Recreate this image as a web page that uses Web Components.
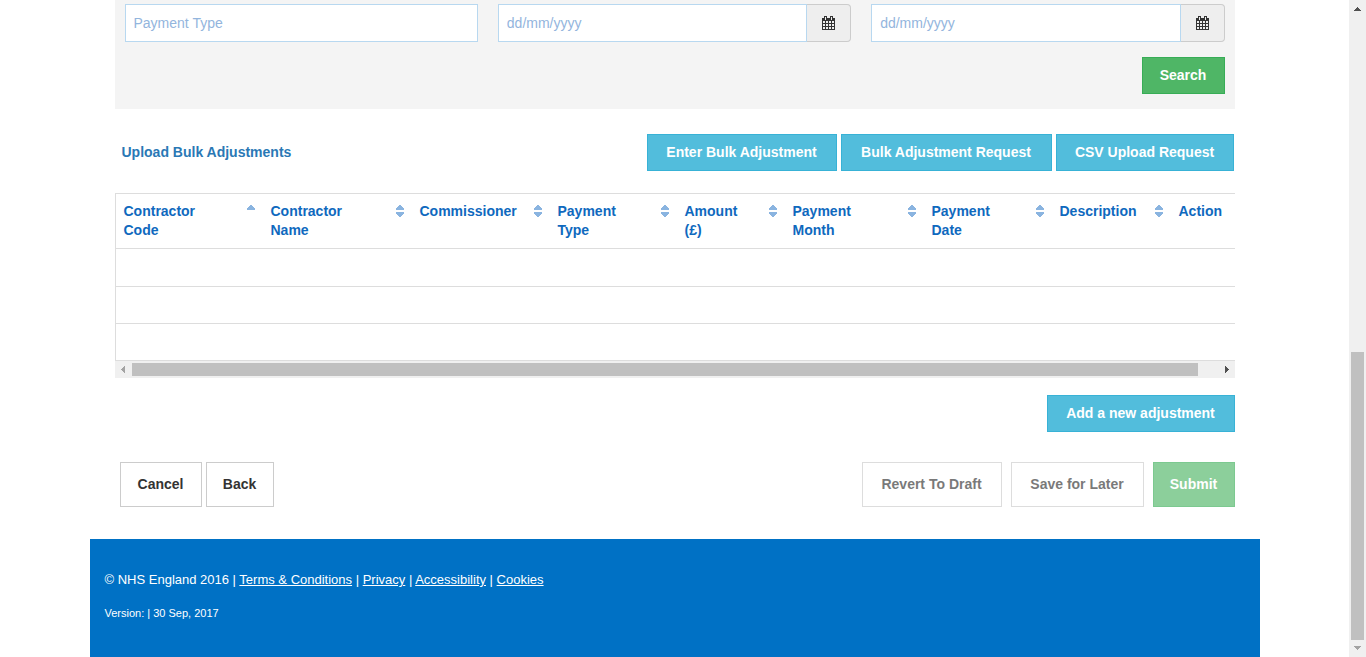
<!DOCTYPE html>
<html lang="en">
<head>
<meta charset="utf-8">
<title>Bulk Adjustments</title>
<style>
html { height: 100%; }
body { margin: 0; min-height: 100%; display: flex; background: #fff; color: #333;
  font: 14px/19px "Liberation Sans", Arial, sans-serif; }
adjustments-page { flex: 1; min-width: 0; }
</style>
</head>
<body>
<adjustments-page></adjustments-page>
<scroll-rail vertical></scroll-rail>
<script>
function define(name, html, setup) {
  const template = document.createElement('template');
  template.innerHTML = html;
  customElements.define(name, class extends HTMLElement {
    constructor() {
      super();
      this.attachShadow({ mode: 'open' }).append(template.content.cloneNode(true));
    }
    connectedCallback() { if (setup) setup(this, this.shadowRoot); }
  });
}

define('scroll-rail', `
<style>
:host { display: grid; background: #f0f0f0; grid-template: 17px / 17px minmax(0, 1066fr) minmax(0, 20fr) 17px; }
:host([vertical]) { grid-template: 17px minmax(0, 335fr) minmax(0, 288fr) 17px / 17px; width: 17px; align-self: stretch; }
i { display: block; background: #c0c0c0; margin: 2px 0; grid-area: 1 / 2; }
:host([vertical]) i { margin: 0 2px; grid-area: 3 / 1; }
svg { width: 17px; height: 17px; shape-rendering: crispEdges; }
.end { grid-area: 1 / 4; }
:host([vertical]) .end { grid-area: 4 / 1; }
.off { fill: #a3a3a3; } .on { fill: #505050; }
.v { display: none; }
:host([vertical]) .v { display: inline; }
:host([vertical]) .h { display: none; }
</style>
<svg viewBox="0 0 17 17" aria-hidden="true"><path class="h off" d="M10 5v7L6 8.500z"/><path class="v on" d="M5 11h7L8.500 7z"/></svg>
<i></i>
<svg class="end" viewBox="0 0 17 17" aria-hidden="true"><path class="h on" d="M7 5v7l4-3.500z"/><path class="v off" d="M5 6h7l-3.500 4z"/></svg>`);

define('action-button', `
<style>
:host { display: block; --fill: #fff; --edge: #ccc; --ink: #333; }
:host([kind=info]) { --fill: #52bddc; --edge: #38b2d6; --ink: #fff; }
:host([kind=success]) { --fill: #4fb666; --edge: #37ad56; --ink: #fff; }
button { display: block; width: 100%; height: 37px; padding: 0 16px; border: 1px solid var(--edge);
  background: var(--fill); color: var(--ink); font: bold 14px/19px "Liberation Sans", Arial, sans-serif; white-space: nowrap; cursor: pointer; }
:host([tall]) button { height: 45px; }
button:disabled { opacity: .65; cursor: default; }
</style>
<button type="button"><slot></slot></button>`, (host, root) => {
  root.querySelector('button').disabled = host.hasAttribute('disabled');
});

define('filter-field', `
<style>
:host { display: flex; min-width: 0; height: 38px; }
input { flex: 1; min-width: 0; box-sizing: border-box; margin: 0; padding: 0 8px; border: 1px solid #b8d8f0; border-radius: 0;
  background: #fff; color: #333; font: 14px/19px "Liberation Sans", Arial, sans-serif; }
input::placeholder { color: #93b5dd; opacity: 1; }
button { display: none; width: 44px; padding: 0; border: 1px solid #ccc; border-left: 0; border-radius: 0 4px 4px 0; background: #eee; }
:host([date]) button { display: grid; place-items: center; }
svg { width: 13px; height: 14px; shape-rendering: crispEdges; }
</style>
<input type="text">
<button type="button" aria-label="Open calendar"><svg viewBox="0 0 13 14" aria-hidden="true"><path fill="#333" fill-rule="evenodd" d="M0 2h2V0h3v2h3V0h3v2h2v12H0zM3 1h1v3H3zM9 1h1v3H9zM1 5h2v2H1zM4 5h2v2H4zM7 5h2v2H7zM10 5h2v2h-2zM1 8h2v2H1zM4 8h2v2H4zM7 8h2v2H7zM10 8h2v2h-2zM1 11h2v2H1zM4 11h2v2H4zM7 11h2v2H7zM10 11h2v2h-2z"/></svg></button>`, (host, root) => {
  const input = root.querySelector('input');
  input.placeholder = host.getAttribute('hint');
  input.setAttribute('aria-label', host.getAttribute('label'));
});

define('filter-panel', `
<style>
:host { display: block; background: #f4f4f4; padding: 4px 10px 15px; }
.fields { display: grid; grid-template-columns: repeat(3, minmax(0, 1fr)); gap: 20px; }
.submit { display: flex; justify-content: flex-end; margin-top: 15px; }
action-button { min-width: 83px; }
</style>
<div class="fields">
<filter-field hint="Payment Type" label="Payment Type"></filter-field>
<filter-field date hint="dd/mm/yyyy" label="Date from"></filter-field>
<filter-field date hint="dd/mm/yyyy" label="Date to"></filter-field>
</div>
<div class="submit"><action-button kind="success">Search</action-button></div>`);

define('sort-icon', `
<style>
:host { display: block; width: 8px; height: 12px; }
svg { display: block; width: 8px; height: 12px; fill: #8ab4e0; shape-rendering: crispEdges; }
:host([ascending]) .down { display: none; }
</style>
<svg viewBox="0 0 8 12" aria-hidden="true"><path d="M3 0h2v1h1v1h1v1h1v2H0V3h1V2h1V1h1z"/><path class="down" d="M0 7h8v2H7v1H6v1H5v1H3v-1H2v-1H1V9H0z"/></svg>`);

define('adjustments-table', `
<style>
:host { display: block; }
.view { overflow: hidden; }
table { width: 103%; table-layout: fixed; border-collapse: separate; border-spacing: 0; border: 1px solid #ddd; border-width: 1px 0 0 1px; }
th, td { padding: 0 8px; border-bottom: 1px solid #ddd; text-align: left; vertical-align: top; }
th { padding-top: 8px; height: 46px; color: #0f69be; font-weight: bold; }
td { height: 36px; }
tbody tr:first-child td { height: 37px; }
th div { display: flex; justify-content: space-between; }
sort-icon { margin-top: 3px; }
</style>
<div class="view"><table>
<colgroup></colgroup><thead><tr></tr></thead>
<tbody></tbody></table></div>
<scroll-rail></scroll-rail>`, (host, root) => {
  const columns = [['Contractor<br>Code', 147], ['Contractor<br>Name', 149], ['Commissioner', 138], ['Payment<br>Type', 127],
    ['Amount<br>(£)', 108], ['Payment<br>Month', 139], ['Payment<br>Date', 128], ['Description', 119], ['Action', 0]];
  root.querySelector('colgroup').innerHTML = columns.map(c => c[1] ? `<col style="width:${c[1]}px">` : '<col>').join('');
  root.querySelector('thead tr').innerHTML = columns.map(([label], i) =>
    `<th scope="col"${i ? '' : ' aria-sort="ascending"'}><div><span>${label}</span>${i < 8 ? `<sort-icon${i ? '' : ' ascending'}></sort-icon>` : ''}</div></th>`).join('');
  root.querySelector('tbody').innerHTML = ('<tr>' + '<td></td>'.repeat(9) + '</tr>').repeat(3);
});

define('page-footer', `
<style>
:host { display: block; background: #0071c5; color: #fff; padding: 31px 15px 34px; }
p { margin: 0; font-size: 13px; }
a { color: inherit; }
p.version { margin-top: 15px; font-size: 11px; }
</style>
<p>© NHS England 2016 | <a href="#terms">Terms &amp; Conditions</a> | <a href="#privacy">Privacy</a> | <a href="#accessibility">Accessibility</a> | <a href="#cookies">Cookies</a></p>
<p class="version">Version: | 30 Sep, 2017</p>`);

define('adjustments-page', `
<style>
:host { display: block; }
.container { max-width: 1170px; margin: 0 auto; }
main { padding: 0 25px 32px; }
.row { display: flex; align-items: center; }
.bar { padding: 25px 1px 22px 7px; gap: 4px; }
h2 { margin: 0 auto 0 0; color: #2a78b5; font-size: 14px; line-height: 19px; }
.add { justify-content: flex-end; padding: 17px 0 30px; }
.foot { padding-left: 5px; justify-content: space-between; }
.group { display: flex; gap: 4px; }
.group.wide { gap: 9px; }
</style>
<div class="container">
<main>
<filter-panel></filter-panel>
<div class="row bar"><h2>Upload Bulk Adjustments</h2>
<action-button kind="info" style="min-width:190px">Enter Bulk Adjustment</action-button>
<action-button kind="info" style="min-width:211px">Bulk Adjustment Request</action-button>
<action-button kind="info" style="min-width:178px">CSV Upload Request</action-button></div>
<adjustments-table></adjustments-table>
<div class="row add"><action-button kind="info" style="min-width:188px">Add a new adjustment</action-button></div>
<div class="row foot">
<div class="group"><action-button tall style="min-width:82px">Cancel</action-button><action-button tall style="min-width:68px">Back</action-button></div>
<div class="group wide"><action-button tall disabled style="min-width:140px">Revert To Draft</action-button><action-button tall disabled style="min-width:133px">Save for Later</action-button><action-button kind="success" tall disabled style="min-width:82px">Submit</action-button></div>
</div>
</main>
<page-footer></page-footer>
</div>`);
</script>
</body>
</html>
